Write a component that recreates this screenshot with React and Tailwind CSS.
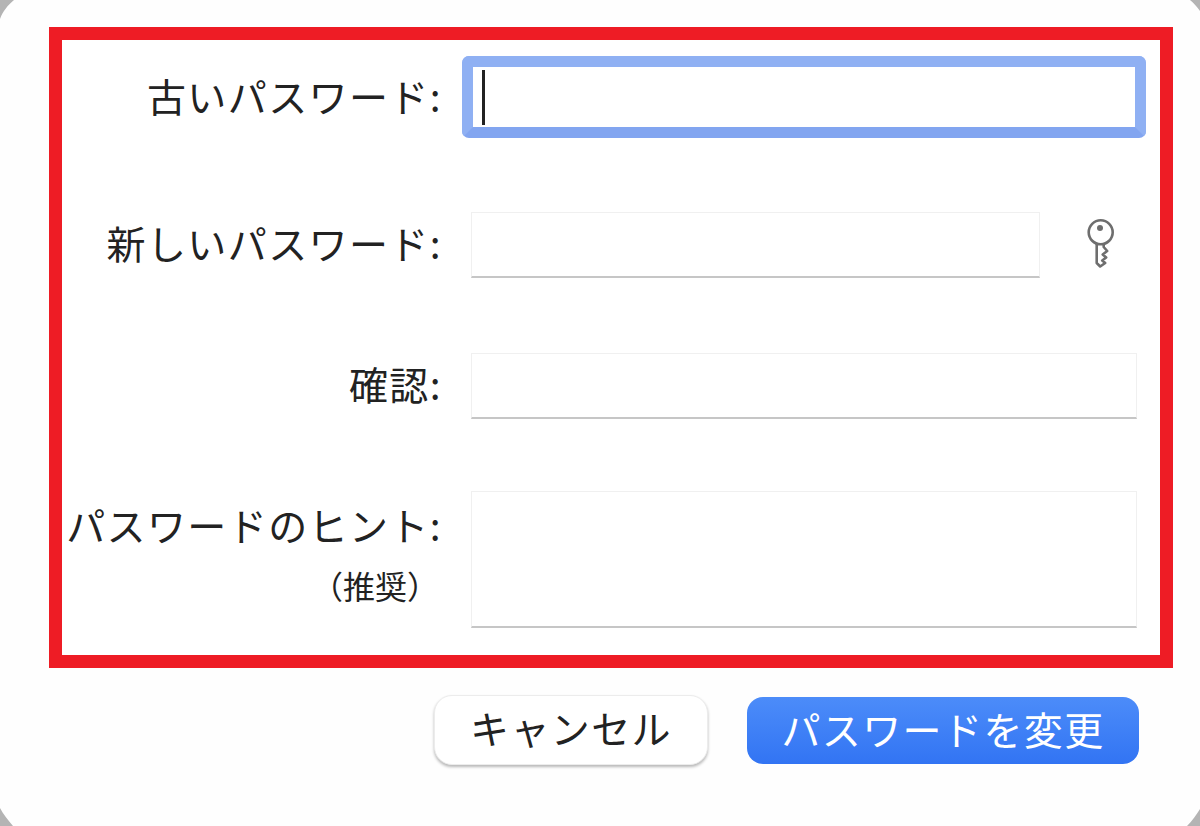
const jp = "font-['Noto_Sans_CJK_JP',sans-serif]";

function Corner({ className, d }) {
  return (
    <svg className={`absolute ${className}`} width="24" height="24" viewBox="0 0 24 24">
      <path d={d} fill="#b4b4b4" />
    </svg>
  );
}

function Label({ children, className = "" }) {
  return (
    <div className={`w-[380px] shrink-0 text-right text-[39px] leading-[50px] tracking-[1.4px] text-[#222] font-normal ${className}`}>
      {children}
    </div>
  );
}

function Field({ className = "" }) {
  return <div className={`bg-white border border-[#f0f0f0] border-b-2 border-b-[#c6c6c6] ${className}`} />;
}

function KeyIcon() {
  return (
    <svg width="27" height="49" viewBox="0 0 27 49" fill="none" stroke="#6e6e6e" strokeWidth="2.6" strokeLinejoin="round">
      <circle cx="13.7" cy="13.3" r="12" />
      <circle cx="13" cy="9" r="3" fill="#6e6e6e" stroke="none" />
      <path d="M9.7 24.5V44l3.5 3.5 5-3.5-3-2.5 4-3-3.5-3 4.5-3.5-3.5-4V24.5" />
    </svg>
  );
}

export default function App() {
  return (
    <div className={`relative w-[1200px] h-[826px] overflow-hidden bg-[#fefefe] ${jp}`}>
      <Corner className="left-0 top-0" d="M0 0H14C8 5 3 11 0 19Z" />
      <Corner className="right-0 top-0" d="M24 0H14C18 3 21 7 24 11Z" />
      <Corner className="left-0 bottom-0" d="M0 24V6C3 12 8 18 13 24Z" />
      <Corner className="right-0 bottom-0" d="M24 24V7C21 12 16 19 11 24Z" />

      <div className="pl-[49px] pt-[27px]">
        <div className="w-[1124px] h-[641px] border-[13px] border-[#ee1c25] bg-white">
          <div className="flex items-start pt-[16px]">
            <Label className="pt-[14px]">古いパスワード:</Label>
            <div className="ml-[20px] w-[684px] h-[82px] rounded-[7px] border-[11px] border-[#8fb0f3] border-b-[#82a5f0] bg-white flex items-center pl-[9px]">
              <div className="w-[3px] h-[55px] bg-[#222]" />
            </div>
          </div>
          <div className="flex items-start mt-[74px]">
            <Label className="pt-[5px]">新しいパスワード:</Label>
            <Field className="ml-[29px] w-[569px] h-[66px]" />
            <div className="ml-[47px] mt-[7px]"><KeyIcon /></div>
          </div>
          <div className="flex items-start mt-[75px]">
            <Label className="pt-[5px]">確認:</Label>
            <Field className="ml-[29px] w-[666px] h-[66px]" />
          </div>
          <div className="flex items-start mt-[72px]">
            <div className="w-[380px] shrink-0">
              <Label className="pt-[8px]">パスワードのヒント:</Label>
              <div className="text-right text-[32px] leading-[40px] text-[#222] pr-[3px] pt-[16px]">（推奨）</div>
            </div>
            <Field className="ml-[29px] w-[666px] h-[137px]" />
          </div>
        </div>
        <div className="flex items-start justify-end pr-[61px] mt-[27px]">
          <button className="w-[274px] h-[70px] pb-[5px] rounded-[18px] bg-white border border-[#ececec] shadow-[0_2px_3px_rgba(0,0,0,0.28)] text-[39px] tracking-[1.4px] text-[#222]">
            キャンセル
          </button>
          <button className="ml-[39px] mt-[2px] w-[392px] h-[67px] pb-[5px] rounded-[16px] bg-gradient-to-b from-[#4c8cf9] to-[#3274f3] text-[39px] tracking-[1.4px] text-white">
            パスワードを変更
          </button>
        </div>
      </div>
    </div>
  );
}
